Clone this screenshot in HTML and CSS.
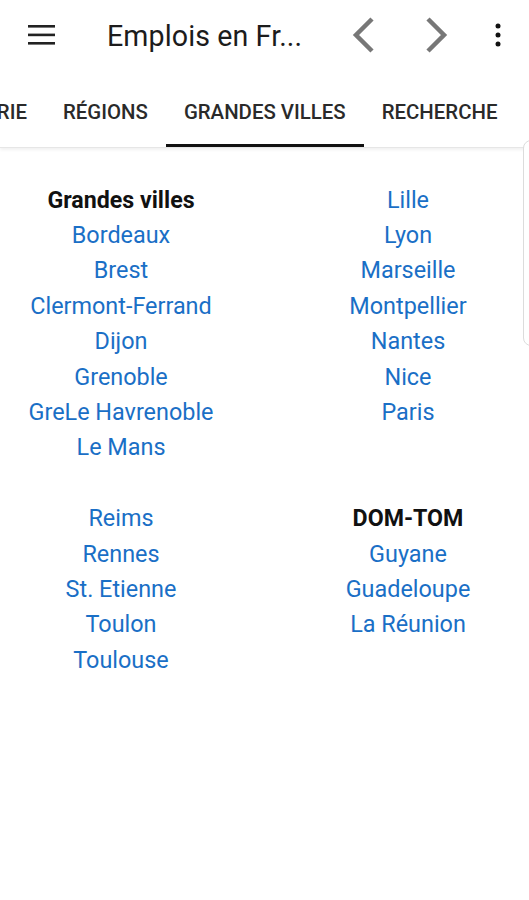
FILE: index.html
```html
<!DOCTYPE html>
<html lang="fr">
<head>
<meta charset="utf-8">
<title>Emplois en France</title>
<link rel="stylesheet" href="styles.css">
</head>
<body>
<div class="app">
  <header class="topbar">
    <button class="icon-btn menu" aria-label="Menu">
      <svg width="28" height="22" viewBox="0 0 28 22"><rect x="0" y="1" width="27" height="2.6" fill="#222"/><rect x="0" y="9.6" width="27" height="2.6" fill="#222"/><rect x="0" y="18" width="27" height="2.6" fill="#222"/></svg>
    </button>
    <h1 class="title">Emplois en Fr...</h1>
    <button class="icon-btn prev" aria-label="Précédent">
      <svg width="26" height="36" viewBox="0 0 26 36"><path d="M21 2 L5 18 L21 34" fill="none" stroke="#777" stroke-width="4.5"/></svg>
    </button>
    <button class="icon-btn next" aria-label="Suivant">
      <svg width="26" height="36" viewBox="0 0 26 36"><path d="M5 2 L21 18 L5 34" fill="none" stroke="#777" stroke-width="4.5"/></svg>
    </button>
    <button class="icon-btn more" aria-label="Plus">
      <svg width="6" height="24" viewBox="0 0 6 24"><circle cx="3" cy="3" r="2.5" fill="#111"/><circle cx="3" cy="12" r="2.5" fill="#111"/><circle cx="3" cy="21" r="2.5" fill="#111"/></svg>
    </button>
  </header>
  <nav class="tabs">
    <div class="tab-strip">
      <span class="tab partial"><span class="tab-label">CATÉGORIE</span></span>
      <span class="tab">RÉGIONS</span>
      <span class="tab active">GRANDES VILLES</span>
      <span class="tab">RECHERCHE</span>
    </div>
  </nav>
  <main class="content">
    <div class="grid">
      <span class="cell head">Grandes villes</span><a class="cell link">Lille</a>
      <a class="cell link">Bordeaux</a><a class="cell link">Lyon</a>
      <a class="cell link">Brest</a><a class="cell link">Marseille</a>
      <a class="cell link">Clermont-Ferrand</a><a class="cell link">Montpellier</a>
      <a class="cell link">Dijon</a><a class="cell link">Nantes</a>
      <a class="cell link">Grenoble</a><a class="cell link">Nice</a>
      <a class="cell link">GreLe Havrenoble</a><a class="cell link">Paris</a>
      <a class="cell link">Le Mans</a><span class="cell"></span>
      <span class="cell"></span><span class="cell"></span>
      <a class="cell link">Reims</a><span class="cell head">DOM-TOM</span>
      <a class="cell link">Rennes</a><a class="cell link">Guyane</a>
      <a class="cell link">St. Etienne</a><a class="cell link">Guadeloupe</a>
      <a class="cell link">Toulon</a><a class="cell link">La Réunion</a>
      <a class="cell link">Toulouse</a><span class="cell"></span>
    </div>
    <div class="edge-panel"></div>
  </main>
</div>
</body>
</html>
```
FILE: styles.css
```css
* { box-sizing: border-box; }
html, body {
  margin: 0;
  padding: 0;
  background: #fff;
  font-family: Roboto, "Noto Sans", Arial, sans-serif;
}
.app {
  width: 529px;
  height: 900px;
  overflow: hidden;
  background: #fff;
}
.topbar {
  height: 76px;
  display: flex;
  align-items: center;
}
.icon-btn {
  border: 0;
  background: none;
  padding: 0;
  margin: 0;
  display: flex;
  align-items: center;
  justify-content: center;
}
.menu { margin-left: 28px; margin-top: -6px; }
.title {
  margin: -4px 0 0 51px;
  font-size: 28.6px;
  font-weight: 400;
  color: #1c1c1c;
  width: 223px;
  white-space: nowrap;
  letter-spacing: 0.1px;
}
.prev { margin-left: 21px; margin-top: -6px; }
.next { margin-left: 46px; margin-top: -6px; }
.more { margin-left: 46px; margin-top: -6px; }

.tabs {
  height: 72px;
  overflow: hidden;
  border-bottom: 1px solid #e6e6e6;
  box-shadow: 0 2px 3px rgba(0,0,0,0.06);
}
.tab-strip {
  display: flex;
  height: 71px;
}
.tab {
  flex: none;
  padding: 3px 18px 0;
  display: flex;
  align-items: center;
  height: 71px;
  font-size: 20.4px;
  font-weight: 500;
  color: #2a2a2a;
  border-bottom: 3px solid transparent;
  white-space: nowrap;
}
.tab.partial {
  width: 45px;
  overflow: hidden;
  justify-content: flex-end;
}
.tab-label { flex: none; }
.tab.active { border-bottom-color: #111; }

.content {
  position: relative;
  padding-top: 34px;
}
.grid {
  display: grid;
  grid-template-columns: 242px 242px;
  column-gap: 45px;
  grid-auto-rows: 35.4px;
}
.cell {
  display: flex;
  align-items: center;
  justify-content: center;
  font-size: 23.4px;
  white-space: nowrap;
}
.link { color: #1a6fc6; }
.head { color: #111; font-weight: 700; font-size: 23.2px; }

.edge-panel {
  position: absolute;
  top: -8px;
  right: -12px;
  width: 18px;
  height: 206px;
  border: 1px solid #dcdcdc;
  border-radius: 8px;
  background: #fff;
}
```
